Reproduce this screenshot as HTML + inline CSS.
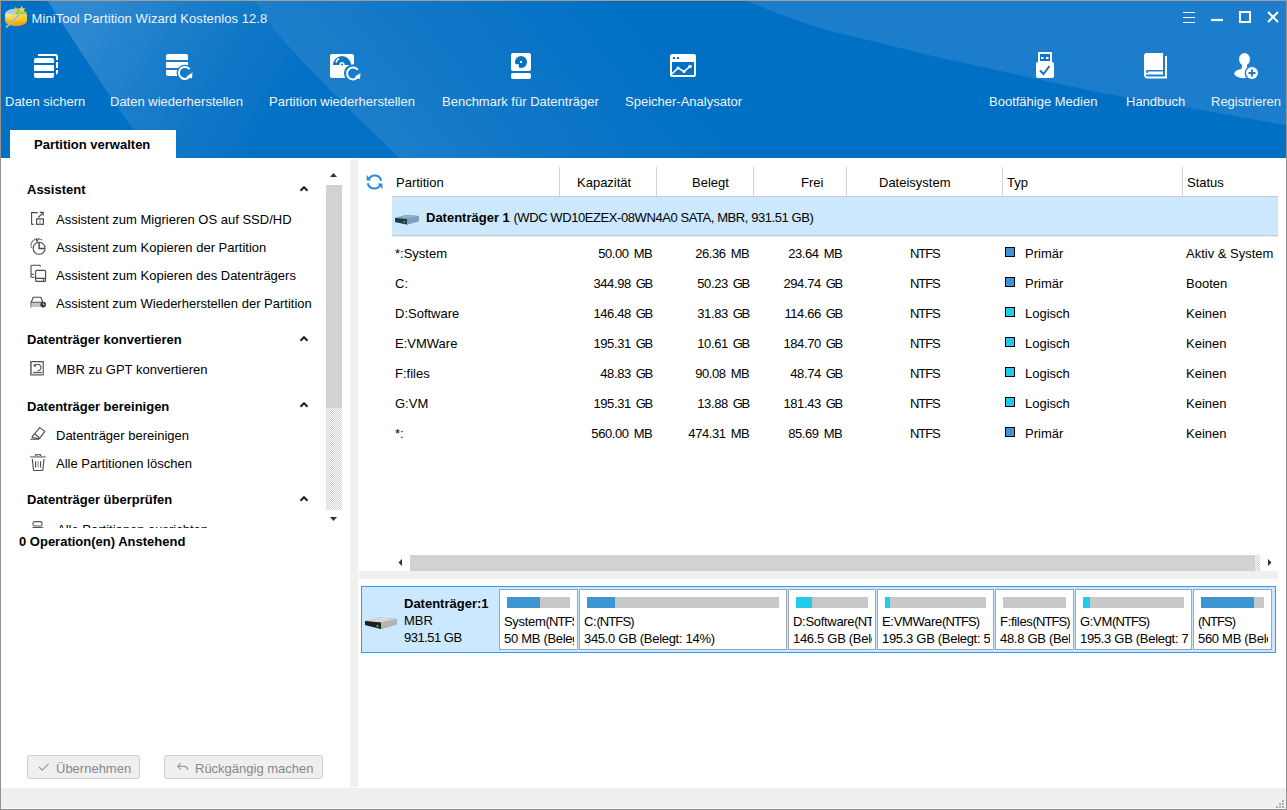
<!DOCTYPE html>
<html><head><meta charset="utf-8">
<style>
*{margin:0;padding:0;box-sizing:border-box}
html,body{width:1287px;height:810px;overflow:hidden;background:#fff}
body{position:relative;font-family:"Liberation Sans",sans-serif;font-size:13px;line-height:15px;color:#000}
.a{position:absolute;white-space:nowrap}
.b{font-weight:bold}
.n{letter-spacing:-0.5px}
#win{position:absolute;left:0;top:0;width:1287px;height:810px;border:1px solid #959290;border-top-color:#a89b92;border-bottom-color:#8a8a8a}
#hdr{position:absolute;left:1px;top:1px;width:1285px;height:157px;background:#0070c4;overflow:hidden}
.tb{color:#eef4fa}
.ic{position:absolute}
</style></head><body>
<div id="hdr">
<svg width="1285" height="157" style="position:absolute;left:0;top:0">
<defs>
<linearGradient id="gA" gradientUnits="userSpaceOnUse" x1="85" y1="25" x2="265" y2="130">
<stop offset="0" stop-color="#2e89d1"/>
<stop offset="0.4" stop-color="#1a7dca"/>
<stop offset="1" stop-color="#0571c4"/>
</linearGradient>
<linearGradient id="gB" gradientUnits="userSpaceOnUse" x1="316" y1="79" x2="540" y2="-95">
<stop offset="0" stop-color="#1d7fcb"/>
<stop offset="0.35" stop-color="#1378c8"/>
<stop offset="1" stop-color="#0070c4"/>
</linearGradient>
<linearGradient id="gB2" gradientUnits="userSpaceOnUse" x1="400" y1="120" x2="720" y2="120">
<stop offset="0" stop-color="#0070c4" stop-opacity="0"/>
<stop offset="1" stop-color="#0070c4" stop-opacity="1"/>
</linearGradient>
</defs>
<path d="M46,-1 L72.8,40 L99,80 L126,120 L157,158 L399.5,158 L350,110 L301,60 L274,30 L254,-1 Z" fill="url(#gA)"/>
<path d="M254,-1 L274,30 L301,60 L350,110 L399.5,158 L760,158 L700,-1 Z" fill="url(#gB)"/>
<path d="M743,-1 L783,15 L823,28.5 L887,44 L940,57 L1100,92 L1200,109 L1286,124.5 L1286,-1 Z" fill="#1b7dcb"/>
</svg>
</div>

<!-- title -->
<svg class="ic" style="left:0;top:0" width="32" height="32">
<defs><linearGradient id="gold" x1="0" y1="0" x2="0" y2="1"><stop offset="0" stop-color="#ffe24a"/><stop offset="1" stop-color="#e89a00"/></linearGradient>
<linearGradient id="gtop" x1="0" y1="0" x2="1" y2="1"><stop offset="0" stop-color="#fff3a0"/><stop offset="1" stop-color="#f0c020"/></linearGradient></defs>
<path d="M5,14.5 v6 a11,5.8 0 0 0 22,0 v-6z" fill="url(#gold)"/>
<ellipse cx="16" cy="14.5" rx="11" ry="5.8" fill="url(#gtop)"/>
<path d="M16,14.5 L5.2,13.2 A11,5.8 0 0 1 15,8.7z" fill="#9fd0f4"/>
<path d="M16,14.5 L15,8.7 A11,5.8 0 0 1 26.8,13.5z" fill="#74d25a"/>
<polygon points="21.7,5.6 22.8,8.3 25.6,8.4 23.4,10.2 24.2,13 21.7,11.4 19.2,13 20,10.2 17.8,8.4 20.6,8.3" fill="#f3d24a"/>
<polygon points="15.8,6.6 16.7,8.8 19,8.9 17.2,10.3 17.8,12.6 15.8,11.3 13.8,12.6 14.4,10.3 12.6,8.9 14.9,8.8" fill="#ecc844"/>
<line x1="6.2" y1="27.4" x2="20.7" y2="13.3" stroke="#e0e0e0" stroke-width="1.8"/>
<line x1="6.2" y1="27.4" x2="20.7" y2="13.3" stroke="#6a6a6a" stroke-width="0.7"/>
</svg>
<div class="a tb" style="left:31.5px;top:11px;letter-spacing:0.08px">MiniTool Partition Wizard Kostenlos 12.8</div>

<!-- window controls -->
<svg class="ic" style="left:1180px;top:8px" width="104" height="20">
<g stroke="#fff" fill="none">
<path d="M3,4.5h12M3,9.5h12M3,14.5h12" stroke-width="1"/>
<path d="M31,12h12" stroke-width="2.2"/>
<rect x="60" y="4" width="10" height="10" stroke-width="2"/>
<path d="M88,4l10,10M98,4l-10,10" stroke-width="2"/>
</g>
</svg>


<!-- toolbar icons -->
<svg class="ic" style="left:0;top:0" width="1287" height="100">
<g fill="#fff">
<!-- 1 Daten sichern -->
<path d="M36,58h16a2,2 0 0 1 2,2v3h-20v-3a2,2 0 0 1 2,-2z"/>
<rect x="34" y="65" width="20" height="6"/>
<path d="M34,73h20v3a2,2 0 0 1 -2,2h-16a2,2 0 0 1 -2,-2z"/>
<path d="M38,54h17.5a2.5,2.5 0 0 1 2.5,2.5v3.5h-2v-3.5a0.5,0.5 0 0 0 -0.5,-0.5h-17.5z"/>
<rect x="56" y="62" width="2" height="6"/>
<path d="M56,70h2v3l-2,2z"/>
<!-- 2 Daten wiederherstellen -->
<path d="M168,54h18a2,2 0 0 1 2,2v4h-22v-4a2,2 0 0 1 2,-2z"/>
<path d="M166,62h22v6h-22z"/>
<path d="M166,70h12v6h-10a2,2 0 0 1 -2,-2z"/>
</g>
<path d="M166,62h22v6h-22z" fill="#fff"/>
<circle cx="184.8" cy="73" r="8.2" fill="#157ac8"/>
<path d="M189.6,69.2 A6,6 0 1 0 190,76" stroke="#fff" stroke-width="2" fill="none"/>
<polygon points="186.5,76.5 192.5,72.5 192,78.5" fill="#fff"/>
<!-- 3 Partition wiederherstellen -->
<rect x="330" y="54" width="24" height="24" rx="2" fill="#fff"/>
<path d="M333,65a9,9 0 0 1 18,0z" fill="#0d74c6"/>
<path d="M336,62.5a6.5,6.5 0 0 1 3,-4" stroke="#fff" stroke-width="1.6" fill="none"/>
<circle cx="342" cy="64.5" r="2.6" fill="#fff"/>
<circle cx="342" cy="64.5" r="1" fill="#0d74c6"/>
<circle cx="353" cy="73.2" r="9" fill="#1a7dca"/>
<path d="M357.8,69.8 A6,6 0 1 0 358.2,76.5" stroke="#fff" stroke-width="2" fill="none"/>
<polygon points="354.5,77 360.5,73 360,79" fill="#fff"/>
<!-- 4 Benchmark -->
<rect x="511" y="53" width="20" height="18" rx="2" fill="#fff"/>
<rect x="511" y="73" width="20" height="6" rx="2" fill="#fff"/>
<circle cx="521" cy="61.9" r="6" fill="#0a72c5"/><rect x="514.5" y="64.2" width="4.3" height="4.5" fill="#fff"/>
<rect x="520" y="61" width="2" height="2" fill="#fff"/>
<!-- 5 Speicher-Analysator -->
<rect x="670" y="54" width="26" height="23" rx="2" fill="#fff"/>
<rect x="672" y="62" width="22" height="13" fill="#0670c4"/>
<rect x="673" y="57" width="2" height="2" fill="#0670c4"/>
<rect x="677" y="57" width="2" height="2" fill="#0670c4"/>
<polyline points="672,74 678,68 684,71.5 690,66.5" stroke="#fff" stroke-width="1.6" fill="none"/>
<circle cx="678" cy="68" r="1.6" fill="#fff"/><circle cx="684" cy="71.5" r="1.6" fill="#fff"/><circle cx="690" cy="66.5" r="1.8" fill="#fff"/>
<!-- 6 USB -->
<rect x="1038" y="52" width="14" height="11" fill="#fff"/>
<rect x="1040" y="54" width="10" height="7" fill="#1274c6"/>
<rect x="1041" y="57" width="2.5" height="2" fill="#fff"/><rect x="1046" y="57" width="2.5" height="2" fill="#fff"/>
<rect x="1036" y="62" width="18" height="16" rx="2" fill="#fff"/>
<polyline points="1040,70.5 1043.5,74 1049.5,66" stroke="#1274c6" stroke-width="2" fill="none"/>
<!-- 7 Handbuch -->
<path d="M1146,53h17v17h-15.5a1.5,1.5 0 0 0 0,3h15.5v1.5h-15.5a3,3 0 0 1 -3.5,-3v-16.5z" fill="#fff"/>
<path d="M1144,55l2,-2v22a1.5,1.5 0 0 0 1.5,1.5h17.5v-20.5h2v22.5h-19a4,4 0 0 1 -4,-4z" fill="#fff"/>
<rect x="1148" y="71.5" width="15" height="1.6" fill="#fff"/>
<!-- 8 Registrieren -->
<ellipse cx="1244.5" cy="59.2" rx="5.4" ry="6.3" fill="#fff"/>
<path d="M1242.3,64.5h4.4l1,5h-6.4z" fill="#fff"/>
<ellipse cx="1243.6" cy="73.6" rx="9.3" ry="4.6" fill="#fff"/>
<circle cx="1252" cy="73" r="7.3" fill="#1b7dcb"/>
<circle cx="1252" cy="73" r="6" fill="#fff"/>
<path d="M1248.5,73h7M1252,69.5v7" stroke="#1b7dcb" stroke-width="2"/>
</svg>

<!-- toolbar texts -->
<div class="a tb" style="left:5px;top:94px">Daten sichern</div>
<div class="a tb" style="left:110px;top:94px">Daten wiederherstellen</div>
<div class="a tb" style="left:269px;top:94px">Partition wiederherstellen</div>
<div class="a tb" style="left:442px;top:94px">Benchmark für Datenträger</div>
<div class="a tb" style="left:625px;top:94px">Speicher-Analysator</div>
<div class="a tb" style="left:989px;top:94px">Bootfähige Medien</div>
<div class="a tb" style="left:1126px;top:94px">Handbuch</div>
<div class="a tb" style="left:1211px;top:94px">Registrieren</div>

<!-- tab -->
<div class="a" style="left:10px;top:130px;width:166px;height:29px;background:#fff"></div>
<div class="a b" style="left:34px;top:137px">Partition verwalten</div>


<!-- separator & status bar -->
<div class="a" style="left:350px;top:159px;width:8px;height:628px;background:#f0f0f0"></div>
<div class="a" style="left:1px;top:788px;width:1285px;height:21px;background:#efefef"></div>

<!-- left panel -->
<div class="a b" style="left:27px;top:182px">Assistent</div>
<div class="a" style="left:56px;top:212px">Assistent zum Migrieren OS auf SSD/HD</div>
<div class="a" style="left:56px;top:240px">Assistent zum Kopieren der Partition</div>
<div class="a" style="left:56px;top:268px">Assistent zum Kopieren des Datenträgers</div>
<div class="a" style="left:56px;top:296px">Assistent zum Wiederherstellen der Partition</div>
<div class="a b" style="left:27px;top:332px">Datenträger konvertieren</div>
<div class="a" style="left:56px;top:362px">MBR zu GPT konvertieren</div>
<div class="a b" style="left:27px;top:399px">Datenträger bereinigen</div>
<div class="a" style="left:56px;top:428px">Datenträger bereinigen</div>
<div class="a" style="left:56px;top:456px">Alle Partitionen löschen</div>
<div class="a b" style="left:27px;top:492px">Datenträger überprüfen</div>
<div class="a" style="left:0;top:510px;width:330px;height:18px;overflow:hidden">
 <div class="a" style="left:57px;top:12px">Alle Partitionen ausrichten</div>
 <svg class="ic" style="left:30px;top:11px" width="16" height="14"><g fill="none" stroke="#555" stroke-width="1.1"><rect x="3" y="0.6" width="9" height="4.4" rx="1.5"/><path d="M2.5,8 v-0.5 a1,1 0 0 1 1,-1 h8.5 a1,1 0 0 1 1,1 v0.5"/></g></svg>
</div>
<div class="a b" style="left:19px;top:534px">0 Operation(en) Anstehend</div>

<!-- chevrons & scrollbar -->
<svg class="ic" style="left:296px;top:170px" width="50" height="360">
<g fill="none" stroke="#1e1e2e" stroke-width="2" stroke-linecap="butt">
<path d="M4.5,20.7l3.5,-3.5l3.5,3.5"/>
<path d="M4.5,170.7l3.5,-3.5l3.5,3.5"/>
<path d="M4.5,236.7l3.5,-3.5l3.5,3.5"/>
<path d="M4.5,330.7l3.5,-3.5l3.5,3.5"/>
</g>
<polygon points="34,7 37.5,3 41,7" fill="#333"/>
<polygon points="34,347 41,347 37.5,351" fill="#333"/>
</svg>
<div class="a" style="left:326px;top:185px;width:16px;height:223px;background:#d2d2d2"></div>
<div class="a" style="left:326px;top:408px;width:16px;height:102px;background:repeating-conic-gradient(#d0d0d0 0 25%,#fff 0 50%) 0 0/2px 2px"></div>

<!-- left icons -->
<svg class="ic" style="left:0;top:0" width="60" height="530">
<g fill="none" stroke="#4a4a4a" stroke-width="1.1">
<path d="M37.8,212.6h-6.2v11.6h2.6"/>
<path d="M38.3,217.5l4.6,-4.6M39.8,212.4h3.4v3.4"/>
<rect x="36.6" y="218.9" width="6.8" height="5.4" stroke-width="1.2"/>
<path d="M40,219v5.4" stroke="#999"/>
<circle cx="39.1" cy="248.3" r="6"/>
<path d="M39.1,242.5v5.9h5.8" stroke-width="1.5"/>
<path d="M31.3,248a7,7 0 0 1 10.8,-7.8" stroke-dasharray="1.6,0.6"/>
<polygon points="35.6,238.5 38.8,239.8 36.6,242.2" fill="#4a4a4a" stroke="none"/>
<path d="M40.5,266.6v-0.3a1,1 0 0 0 -1,-1h-7.5a1,1 0 0 0 -1,1v10a1,1 0 0 0 1,1h2.8M31,274.3h3"/>
<rect x="35.6" y="270.4" width="10" height="11" rx="1"/>
<path d="M35.6,278.4h10M43.5,278.4v3"/>
<path d="M31,307.5v-5l2.3,-5.3h7.6l1.9,5.3"/>
<path d="M30.9,302.3h11.5"/>
<path d="M30.6,361.6h12.6v13h-12.6z"/>
<path d="M31.1,361.6v13h12.1" stroke="#888" stroke-width="1.6"/>
<path d="M35,365.6a3.3,3.3 0 1 1 2.6,5.2"/>
<polygon points="33,364.8 36.3,364.2 35.2,367.5" fill="#4a4a4a" stroke="none"/>
<path d="M33.2,372.4h8.5"/>
<path d="M39.8,427.6l5,3.8l-5.6,7.4l-6.6,-1.2l-0.6,-0.8z" stroke-linejoin="round"/>
<path d="M35,434l4.5,4M30.2,439.3h8.8"/>
<path d="M30.2,456.8h15.5" stroke="#999" stroke-width="1.8"/>
<path d="M35.6,456v-1.3h5v1.3"/>
<path d="M32.3,459l1.1,10.5a1,1 0 0 0 1,1h7.5a1,1 0 0 0 1,-1l1.1,-10.5"/>
<path d="M35.6,461.2v6.3M40.6,461.2v6.3"/>
<path d="M38.1,461.2v6.3" stroke="#aaa" stroke-width="1.5"/>
</g>
<rect x="31.5" y="302.8" width="10.5" height="4.2" fill="#c4c4c4"/>
<circle cx="43.2" cy="304.6" r="2.8" fill="#333"/>
<path d="M43.2,304.6v-1.8M43.2,304.6h1.6" stroke="#fff" stroke-width="0.7"/>
</svg>

<!-- table -->
<svg class="ic" style="left:364px;top:171px" width="22" height="22">
<g fill="none" stroke="#2b8be0" stroke-width="2">
<path d="M17.2,9.8A6.6,6.6 0 0 0 4.6,8.6"/>
<path d="M3.8,12.2A6.6,6.6 0 0 0 16.4,13.4"/>
</g>
<polygon points="2.6,3.8 7.2,9.6 2.6,9.6" fill="#2b8be0"/>
<polygon points="18.4,18.2 13.8,12.4 18.4,12.4" fill="#2b8be0"/>
</svg>
<div class="a" style="left:396px;top:175px">Partition</div>
<div class="a" style="left:577px;top:175px">Kapazität</div>
<div class="a" style="left:692px;top:175px">Belegt</div>
<div class="a" style="left:801px;top:175px">Frei</div>
<div class="a" style="left:879px;top:175px">Dateisystem</div>
<div class="a" style="left:1007px;top:175px">Typ</div>
<div class="a" style="left:1187px;top:175px">Status</div>
<div class="a" style="left:559px;top:167px;width:1px;height:29px;background:#d4d4d4"></div>
<div class="a" style="left:656px;top:167px;width:1px;height:29px;background:#d4d4d4"></div>
<div class="a" style="left:753px;top:167px;width:1px;height:29px;background:#d4d4d4"></div>
<div class="a" style="left:846px;top:167px;width:1px;height:29px;background:#d4d4d4"></div>
<div class="a" style="left:1002px;top:167px;width:1px;height:29px;background:#d4d4d4"></div>
<div class="a" style="left:1182px;top:167px;width:1px;height:29px;background:#d4d4d4"></div>
<div class="a" style="left:392px;top:196px;width:886px;height:1px;background:#cdcac7"></div>
<div class="a" style="left:392px;top:197px;width:886px;height:38px;background:#cce8fc"></div>
<div class="a" style="left:392px;top:235px;width:886px;height:1px;background:#c9c9c9"></div>
<div class="a" style="left:392px;top:236px;width:886px;height:1px;background:#e3f1fd"></div>
<svg class="ic" style="left:394px;top:213px" width="27" height="13">
<polygon points="1,5 12,2 25,3 25,8 13,11.5 1,9" fill="#5f86a8"/>
<polygon points="1,5 12,2 25,3 13,6" fill="#8fb0cc"/>
<polygon points="1,5 13,6 13,11.5 1,9" fill="#203850"/>
<polygon points="13,6 25,3 25,8 13,11.5" fill="#7aa0c0"/>
<rect x="9.5" y="8" width="1.6" height="1.6" fill="#3c3"/>
</svg>
<div class="a" style="left:426px;top:210px"><span class="b">Datenträger 1</span> <span style="letter-spacing:-0.42px">(WDC WD10EZEX-08WN4A0 SATA, MBR, 931.51 GB)</span></div>
<div class="a" style="left:395px;top:246px">*:System</div>
<div class="a" style="right:635px;top:246px;letter-spacing:-0.4px">50.00<span style="margin-left:5px;letter-spacing:-0.6px">MB</span></div>
<div class="a" style="right:538px;top:246px;letter-spacing:-0.4px">26.36<span style="margin-left:5px;letter-spacing:-0.6px">MB</span></div>
<div class="a" style="right:445px;top:246px;letter-spacing:-0.4px">23.64<span style="margin-left:5px;letter-spacing:-0.6px">MB</span></div>
<div class="a" style="letter-spacing:-1.1px;left:910px;top:246px">NTFS</div>
<div class="a" style="left:1005px;top:247px;width:10px;height:10px;border:1px solid #000;background:#3d93d8"></div>
<div class="a" style="left:1025px;top:246px">Primär</div>
<div class="a" style="left:1186px;top:246px">Aktiv &amp; System</div>
<div class="a" style="left:395px;top:276px">C:</div>
<div class="a" style="right:635px;top:276px;letter-spacing:-0.4px">344.98<span style="margin-left:5px;letter-spacing:-1.3px">GB</span></div>
<div class="a" style="right:538px;top:276px;letter-spacing:-0.4px">50.23<span style="margin-left:5px;letter-spacing:-1.3px">GB</span></div>
<div class="a" style="right:445px;top:276px;letter-spacing:-0.4px">294.74<span style="margin-left:5px;letter-spacing:-1.3px">GB</span></div>
<div class="a" style="letter-spacing:-1.1px;left:910px;top:276px">NTFS</div>
<div class="a" style="left:1005px;top:277px;width:10px;height:10px;border:1px solid #000;background:#3d93d8"></div>
<div class="a" style="left:1025px;top:276px">Primär</div>
<div class="a" style="left:1186px;top:276px">Booten</div>
<div class="a" style="left:395px;top:306px">D:Software</div>
<div class="a" style="right:635px;top:306px;letter-spacing:-0.4px">146.48<span style="margin-left:5px;letter-spacing:-1.3px">GB</span></div>
<div class="a" style="right:538px;top:306px;letter-spacing:-0.4px">31.83<span style="margin-left:5px;letter-spacing:-1.3px">GB</span></div>
<div class="a" style="right:445px;top:306px;letter-spacing:-0.4px">114.66<span style="margin-left:5px;letter-spacing:-1.3px">GB</span></div>
<div class="a" style="letter-spacing:-1.1px;left:910px;top:306px">NTFS</div>
<div class="a" style="left:1005px;top:307px;width:10px;height:10px;border:1px solid #000;background:#22cbea"></div>
<div class="a" style="left:1025px;top:306px">Logisch</div>
<div class="a" style="left:1186px;top:306px">Keinen</div>
<div class="a" style="left:395px;top:336px">E:VMWare</div>
<div class="a" style="right:635px;top:336px;letter-spacing:-0.4px">195.31<span style="margin-left:5px;letter-spacing:-1.3px">GB</span></div>
<div class="a" style="right:538px;top:336px;letter-spacing:-0.4px">10.61<span style="margin-left:5px;letter-spacing:-1.3px">GB</span></div>
<div class="a" style="right:445px;top:336px;letter-spacing:-0.4px">184.70<span style="margin-left:5px;letter-spacing:-1.3px">GB</span></div>
<div class="a" style="letter-spacing:-1.1px;left:910px;top:336px">NTFS</div>
<div class="a" style="left:1005px;top:337px;width:10px;height:10px;border:1px solid #000;background:#22cbea"></div>
<div class="a" style="left:1025px;top:336px">Logisch</div>
<div class="a" style="left:1186px;top:336px">Keinen</div>
<div class="a" style="left:395px;top:366px">F:files</div>
<div class="a" style="right:635px;top:366px;letter-spacing:-0.4px">48.83<span style="margin-left:5px;letter-spacing:-1.3px">GB</span></div>
<div class="a" style="right:538px;top:366px;letter-spacing:-0.4px">90.08<span style="margin-left:5px;letter-spacing:-0.6px">MB</span></div>
<div class="a" style="right:445px;top:366px;letter-spacing:-0.4px">48.74<span style="margin-left:5px;letter-spacing:-1.3px">GB</span></div>
<div class="a" style="letter-spacing:-1.1px;left:910px;top:366px">NTFS</div>
<div class="a" style="left:1005px;top:367px;width:10px;height:10px;border:1px solid #000;background:#22cbea"></div>
<div class="a" style="left:1025px;top:366px">Logisch</div>
<div class="a" style="left:1186px;top:366px">Keinen</div>
<div class="a" style="left:395px;top:396px">G:VM</div>
<div class="a" style="right:635px;top:396px;letter-spacing:-0.4px">195.31<span style="margin-left:5px;letter-spacing:-1.3px">GB</span></div>
<div class="a" style="right:538px;top:396px;letter-spacing:-0.4px">13.88<span style="margin-left:5px;letter-spacing:-1.3px">GB</span></div>
<div class="a" style="right:445px;top:396px;letter-spacing:-0.4px">181.43<span style="margin-left:5px;letter-spacing:-1.3px">GB</span></div>
<div class="a" style="letter-spacing:-1.1px;left:910px;top:396px">NTFS</div>
<div class="a" style="left:1005px;top:397px;width:10px;height:10px;border:1px solid #000;background:#22cbea"></div>
<div class="a" style="left:1025px;top:396px">Logisch</div>
<div class="a" style="left:1186px;top:396px">Keinen</div>
<div class="a" style="left:395px;top:426px">*:</div>
<div class="a" style="right:635px;top:426px;letter-spacing:-0.4px">560.00<span style="margin-left:5px;letter-spacing:-0.6px">MB</span></div>
<div class="a" style="right:538px;top:426px;letter-spacing:-0.4px">474.31<span style="margin-left:5px;letter-spacing:-0.6px">MB</span></div>
<div class="a" style="right:445px;top:426px;letter-spacing:-0.4px">85.69<span style="margin-left:5px;letter-spacing:-0.6px">MB</span></div>
<div class="a" style="letter-spacing:-1.1px;left:910px;top:426px">NTFS</div>
<div class="a" style="left:1005px;top:427px;width:10px;height:10px;border:1px solid #000;background:#3d93d8"></div>
<div class="a" style="left:1025px;top:426px">Primär</div>
<div class="a" style="left:1186px;top:426px">Keinen</div>
<svg class="ic" style="left:395px;top:556px" width="885" height="14">
<polygon points="7,3 7,10 3.5,6.5" fill="#333"/>
<polygon points="873,3 873,10 876.5,6.5" fill="#333"/>
</svg>
<div class="a" style="left:410px;top:555px;width:845px;height:16px;background:#d2d2d2"></div>
<div class="a" style="left:1255px;top:555px;width:5px;height:16px;background:repeating-conic-gradient(#d0d0d0 0 25%,#fff 0 50%) 0 0/2px 2px"></div>
<div class="a" style="left:359px;top:571px;width:919px;height:8px;background:#f0f0f0"></div>
<!-- disk map -->
<div class="a" style="left:361px;top:586px;width:915px;height:67px;border:1px solid #3399ff;background:#cce8ff"></div>
<svg class="ic" style="left:364px;top:615px" width="35" height="16">
<polygon points="1,6 16,2.5 33,4 33,9.5 17,14 1,10" fill="#9a9a9a"/>
<polygon points="1,6 16,2.5 33,4 17,7.5" fill="#d8d8d8"/>
<polygon points="1,6 17,7.5 17,14 1,10" fill="#1e1e1e"/>
<polygon points="17,7.5 33,4 33,9.5 17,14" fill="#b5b5b5"/>
<rect x="12.5" y="10" width="2" height="2" fill="#2c2"/>
</svg>
<div class="a b" style="left:404px;top:596px">Datenträger:1</div>
<div class="a" style="left:404px;top:613px">MBR</div>
<div class="a n" style="left:404px;top:630px">931.51 GB</div>
<div class="a" style="left:499px;top:589px;width:79px;height:61px;border:1px solid #9ca6b5;background:#fff;overflow:hidden">
 <div class="a" style="left:7px;top:7px;width:63px;height:11px;background:#c8c8c8"></div>
 <div class="a" style="left:7px;top:7px;width:33px;height:11px;background:#3d96d2"></div>
 <div class="a" style="left:4px;top:24px;width:70px;height:40px;overflow:hidden"><div class="a" style="left:0;top:0;letter-spacing:-0.3px">System<span style="letter-spacing:-0.9px">(NTFS)</span></div><div class="a" style="left:0;top:17px;letter-spacing:-0.3px">50 MB (Belegt: 53%)</div></div>
</div>
<div class="a" style="left:579px;top:589px;width:208px;height:61px;border:1px solid #9ca6b5;background:#fff;overflow:hidden">
 <div class="a" style="left:7px;top:7px;width:192px;height:11px;background:#c8c8c8"></div>
 <div class="a" style="left:7px;top:7px;width:28px;height:11px;background:#3d96d2"></div>
 <div class="a" style="left:4px;top:24px;width:199px;height:40px;overflow:hidden"><div class="a" style="left:0;top:0;letter-spacing:-0.3px">C:<span style="letter-spacing:-0.9px">(NTFS)</span></div><div class="a" style="left:0;top:17px;letter-spacing:-0.3px">345.0 GB (Belegt: 14%)</div></div>
</div>
<div class="a" style="left:788px;top:589px;width:88px;height:61px;border:1px solid #9ca6b5;background:#fff;overflow:hidden">
 <div class="a" style="left:7px;top:7px;width:72px;height:11px;background:#c8c8c8"></div>
 <div class="a" style="left:7px;top:7px;width:16px;height:11px;background:#22cbea"></div>
 <div class="a" style="left:4px;top:24px;width:79px;height:40px;overflow:hidden"><div class="a" style="left:0;top:0;letter-spacing:-0.3px">D:Software<span style="letter-spacing:-0.9px">(NTFS)</span></div><div class="a" style="left:0;top:17px;letter-spacing:-0.3px">146.5 GB (Belegt: 21%)</div></div>
</div>
<div class="a" style="left:877px;top:589px;width:117px;height:61px;border:1px solid #9ca6b5;background:#fff;overflow:hidden">
 <div class="a" style="left:7px;top:7px;width:101px;height:11px;background:#c8c8c8"></div>
 <div class="a" style="left:7px;top:7px;width:5px;height:11px;background:#22cbea"></div>
 <div class="a" style="left:4px;top:24px;width:108px;height:40px;overflow:hidden"><div class="a" style="left:0;top:0;letter-spacing:-0.3px">E:VMWare<span style="letter-spacing:-0.9px">(NTFS)</span></div><div class="a" style="left:0;top:17px;letter-spacing:-0.3px">195.3 GB (Belegt: 5%)</div></div>
</div>
<div class="a" style="left:995px;top:589px;width:79px;height:61px;border:1px solid #9ca6b5;background:#fff;overflow:hidden">
 <div class="a" style="left:7px;top:7px;width:63px;height:11px;background:#c8c8c8"></div>
 <div class="a" style="left:4px;top:24px;width:70px;height:40px;overflow:hidden"><div class="a" style="left:0;top:0;letter-spacing:-0.3px">F:files<span style="letter-spacing:-0.9px">(NTFS)</span></div><div class="a" style="left:0;top:17px;letter-spacing:-0.3px">48.8 GB (Belegt: 0%)</div></div>
</div>
<div class="a" style="left:1075px;top:589px;width:117px;height:61px;border:1px solid #9ca6b5;background:#fff;overflow:hidden">
 <div class="a" style="left:7px;top:7px;width:101px;height:11px;background:#c8c8c8"></div>
 <div class="a" style="left:7px;top:7px;width:7px;height:11px;background:#22cbea"></div>
 <div class="a" style="left:4px;top:24px;width:108px;height:40px;overflow:hidden"><div class="a" style="left:0;top:0;letter-spacing:-0.3px">G:VM<span style="letter-spacing:-0.9px">(NTFS)</span></div><div class="a" style="left:0;top:17px;letter-spacing:-0.3px">195.3 GB (Belegt: 7%)</div></div>
</div>
<div class="a" style="left:1193px;top:589px;width:79px;height:61px;border:1px solid #9ca6b5;background:#fff;overflow:hidden">
 <div class="a" style="left:7px;top:7px;width:63px;height:11px;background:#c8c8c8"></div>
 <div class="a" style="left:7px;top:7px;width:53px;height:11px;background:#3d96d2"></div>
 <div class="a" style="left:4px;top:24px;width:70px;height:40px;overflow:hidden"><div class="a" style="left:0;top:0;letter-spacing:-0.3px"><span style="letter-spacing:-0.9px">(NTFS)</span></div><div class="a" style="left:0;top:17px;letter-spacing:-0.3px">560 MB (Belegt: 84%)</div></div>
</div>
<div class="a" style="left:27px;top:755px;width:113px;height:24px;border:1px solid #cfcfcf;border-radius:3px;background:#efefef"></div>
<div class="a" style="left:164px;top:755px;width:159px;height:24px;border:1px solid #cfcfcf;border-radius:3px;background:#efefef"></div>
<svg class="ic" style="left:36px;top:760px" width="16" height="14"><path d="M3,7l3.2,3.2l6.5,-6.5" stroke="#9a9a9a" stroke-width="1.2" fill="none"/></svg>
<div class="a" style="left:56px;top:761px;color:#888">Übernehmen</div>
<svg class="ic" style="left:174px;top:758px" width="16" height="16"><path d="M3.7,8.3h6a4,4 0 0 1 4,3.6M6.7,5.3l-3,3l3,3" stroke="#9a9a9a" stroke-width="1.2" fill="none"/></svg>
<div class="a" style="left:195px;top:761px;color:#888">Rückgängig machen</div>
<div class="a" style="left:1px;top:808px;width:1285px;height:1px;background:#fafafa"></div>
<svg class="ic" style="left:1270px;top:795px" width="16" height="14"><g fill="#b0b0b0">
<rect x="12" y="5" width="2" height="2"/><rect x="9" y="8" width="2" height="2"/><rect x="12" y="8" width="2" height="2"/>
<rect x="6" y="11" width="2" height="2"/><rect x="9" y="11" width="2" height="2"/><rect x="12" y="11" width="2" height="2"/></g></svg>
<div id="win"></div>
</body></html>
